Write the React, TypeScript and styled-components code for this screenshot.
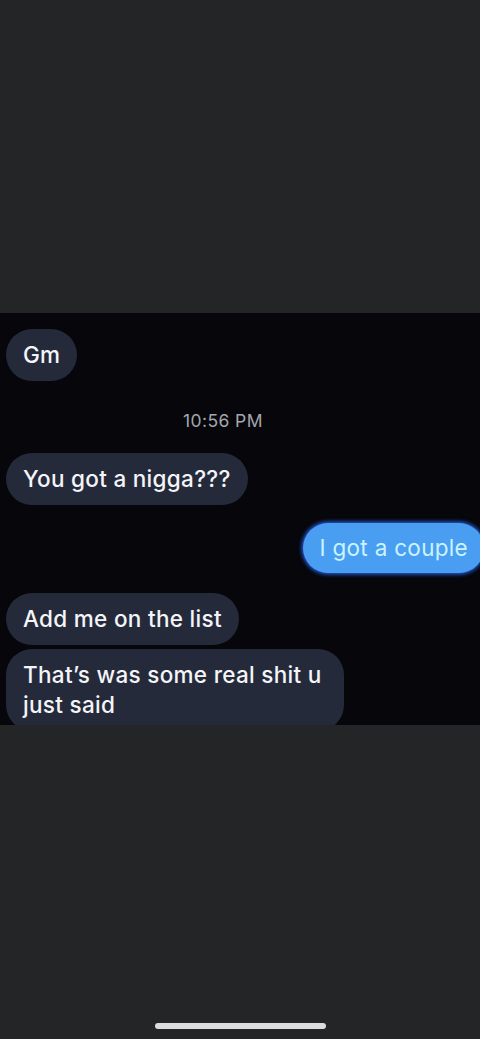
import React from "react";
import styled, { createGlobalStyle } from "styled-components";

const Global = createGlobalStyle`
  html, body { margin: 0; padding: 0; background: #242527; }
  body { font-family: Inter, "Liberation Sans", Arial, sans-serif; }
  #root { min-height: 100vh; }
`;

const Page = styled.div`
  width: 480px;
  height: 1039px;
  display: flex;
  flex-direction: column;
  background: #242527;
  overflow: hidden;
`;

const Filler = styled.div`
  height: 313px;
  flex-shrink: 0;
`;

const Shot = styled.div`
  height: 412px;
  flex-shrink: 0;
  background: #06060b;
  overflow: hidden;
  display: flex;
  flex-direction: column;
  align-items: flex-start;
  padding: 16px 0 0 6px;
  box-sizing: border-box;
`;

const Bottom = styled.div`
  flex: 1;
  display: flex;
  align-items: flex-end;
  justify-content: center;
  padding-bottom: 10px;
`;

const HomeBar = styled.div`
  width: 171px;
  height: 6px;
  border-radius: 3px;
  background: #dcdcdc;
`;

const Bubble = styled.div<{ $mt: number; $out?: boolean }>`
  margin-top: ${(p) => p.$mt}px;
  align-self: ${(p) => (p.$out ? "flex-end" : "flex-start")};
  background: ${(p) => (p.$out ? "#4a9ef2" : "#252a3b")};
  color: ${(p) => (p.$out ? "#c9f4ff" : "#f4f5f8")};
  box-shadow: ${(p) => (p.$out ? "0 0 4px 1px #2c6bff" : "none")};
  font-size: 22.5px;
  font-weight: ${(p) => (p.$out ? 400 : 500)};
  line-height: 30px;
  padding: ${(p) => (p.$out ? "10px 16px" : "11px 17px")};
  border-radius: 26px;
  max-width: 304px;
  letter-spacing: 0.3px;
  margin-right: ${(p) => (p.$out ? "-4px" : "0")};
`;

const Time = styled.div`
  margin-top: 30px;
  align-self: center;
  padding-right: 40px;
  color: #a4a7ae;
  font-size: 17.5px;
  line-height: 20px;
  letter-spacing: 0.4px;
`;

export default function App() {
  return (
    <Page>
      <Global />
      <Filler />
      <Shot>
        <Bubble $mt={0}>Gm</Bubble>
        <Time>10:56 PM</Time>
        <Bubble $mt={22}>You got a nigga???</Bubble>
        <Bubble $mt={18} $out>
          I got a couple
        </Bubble>
        <Bubble $mt={20}>Add me on the list</Bubble>
        <Bubble $mt={4}>That’s was some real shit u just said</Bubble>
      </Shot>
      <Bottom>
        <HomeBar />
      </Bottom>
    </Page>
  );
}
